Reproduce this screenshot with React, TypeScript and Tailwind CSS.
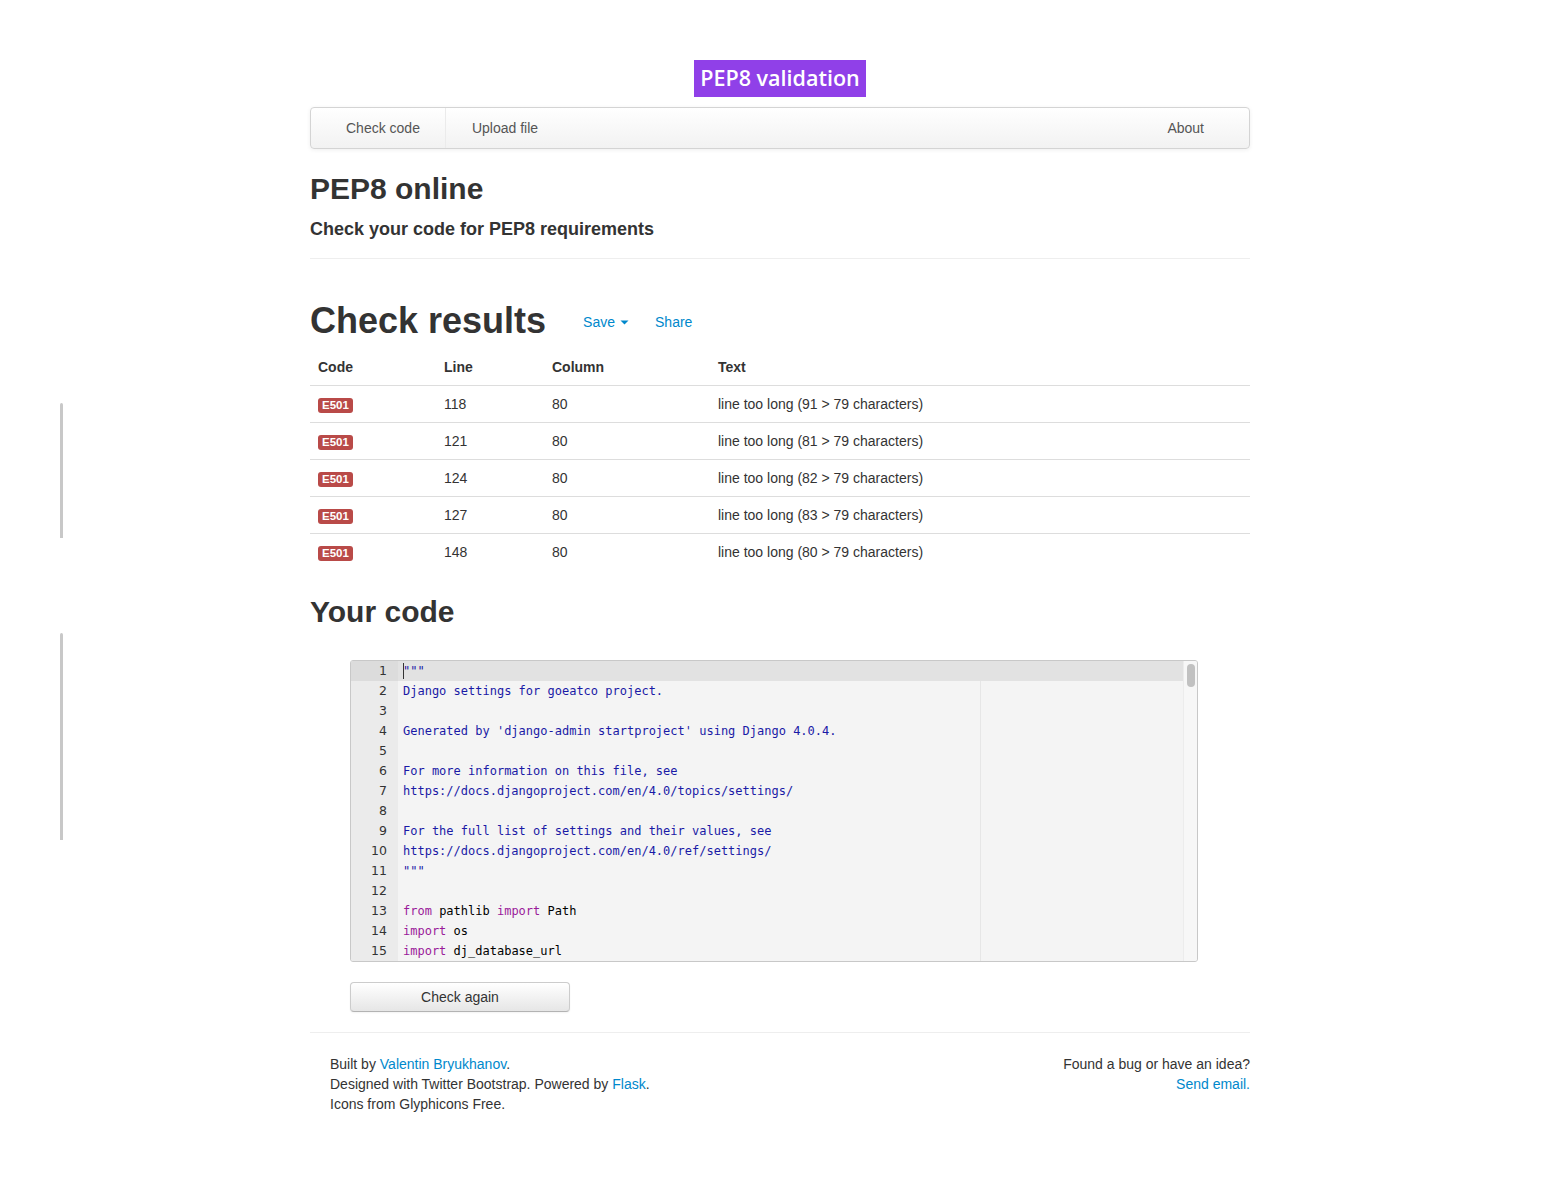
import React from "react";

const rows = [
  { line: 118, col: 80, text: "line too long (91 > 79 characters)" },
  { line: 121, col: 80, text: "line too long (81 > 79 characters)" },
  { line: 124, col: 80, text: "line too long (82 > 79 characters)" },
  { line: 127, col: 80, text: "line too long (83 > 79 characters)" },
  { line: 148, col: 80, text: "line too long (80 > 79 characters)" },
];

type Tok = { t: string; k?: "s" | "k" };
const code: Tok[][] = [
  [{ t: '"""', k: "s" }],
  [{ t: "Django settings for goeatco project.", k: "s" }],
  [],
  [{ t: "Generated by 'django-admin startproject' using Django 4.0.4.", k: "s" }],
  [],
  [{ t: "For more information on this file, see", k: "s" }],
  [{ t: "https://docs.djangoproject.com/en/4.0/topics/settings/", k: "s" }],
  [],
  [{ t: "For the full list of settings and their values, see", k: "s" }],
  [{ t: "https://docs.djangoproject.com/en/4.0/ref/settings/", k: "s" }],
  [{ t: '"""', k: "s" }],
  [],
  [{ t: "from", k: "k" }, { t: " pathlib " }, { t: "import", k: "k" }, { t: " Path" }],
  [{ t: "import", k: "k" }, { t: " os" }],
  [{ t: "import", k: "k" }, { t: " dj_database_url" }],
];

export default function App() {
  return (
    <div
      className="relative min-h-[1194px] bg-white text-[14px] leading-[20px] text-[#333]"
      style={{ fontFamily: '"Liberation Sans", Arial, sans-serif' }}
    >
      <div className="absolute left-[60px] top-[403px] h-[135px] w-[3px] rounded-t-sm bg-[#c8c8c8]" />
      <div className="absolute left-[60px] top-[633px] h-[207px] w-[3px] rounded-t-sm bg-[#c8c8c8]" />

      <div className="mx-auto w-[940px] pt-[60px]">
        <div className="flex justify-center">
          <div
            className="h-[37px] bg-[#9040e8] px-[6px] text-[21.5px] font-semibold leading-[36px] text-white"
            style={{ fontFamily: '"Open Sans", "Noto Sans", sans-serif' }}
          >
            PEP8 validation
          </div>
        </div>

        <div className="mt-[10px] flex h-[42px] items-stretch rounded-[4px] border border-[#d4d4d4] bg-gradient-to-b from-white to-[#f2f2f2] px-[20px] text-[#555] shadow-[0_1px_4px_rgba(0,0,0,0.065)]">
          <div className="flex items-center border-r border-[#ebebeb] pl-[15px] pr-[25px]">Check code</div>
          <div className="flex items-center px-[26px]">Upload file</div>
          <div className="flex-1" />
          <div className="flex items-center pr-[25px]">About</div>
        </div>

        <h2 className="mt-[20px] text-[30px] font-bold leading-[40px] text-[#333]">PEP8 online</h2>
        <h4 className="mt-[10px] text-[18px] font-bold leading-[20px]">Check your code for PEP8 requirements</h4>
        <div className="mt-[19px] border-t border-[#eee]" />

        <div className="mt-[42px] flex h-[40px] items-center">
          <h1 className="text-[36px] font-bold leading-[40px] text-[#333]">Check results</h1>
          <div className="ml-[37px] mt-[2px] flex items-center text-[#0088cc]">
            <span>Save</span>
            <svg width="9" height="5" viewBox="0 0 9 5" className="ml-[5px] mt-[1px]">
              <path d="M0.5 0.5 L4.5 4.5 L8.5 0.5 Z" fill="#0088cc" />
            </svg>
            <span className="ml-[26px]">Share</span>
          </div>
        </div>

        <table className="mt-[8px] w-full border-collapse">
          <thead>
            <tr className="border-b border-[#ddd]">
              <th className="w-[126px] p-[8px] text-left font-bold">Code</th>
              <th className="w-[108px] p-[8px] text-left font-bold">Line</th>
              <th className="w-[166px] p-[8px] text-left font-bold">Column</th>
              <th className="p-[8px] text-left font-bold">Text</th>
            </tr>
          </thead>
          <tbody>
            {rows.map((r, i) => (
              <tr key={i} className={i < rows.length - 1 ? "border-b border-[#ddd]" : ""}>
                <td className="h-[37px] px-[8px] py-0 align-middle">
                  <span className="inline-block rounded-[3px] bg-[#b94a48] px-[4px] text-[11.5px] font-bold leading-[15px] text-white">
                    E501
                  </span>
                </td>
                <td className="px-[8px]">{r.line}</td>
                <td className="px-[8px]">{r.col}</td>
                <td className="px-[8px]">{r.text}</td>
              </tr>
            ))}
          </tbody>
        </table>

        <h2 className="mt-[21px] text-[30px] font-bold leading-[40px] text-[#333]">Your code</h2>

        <div className="px-[40px]">
          <div className="mt-[28px] flex h-[302px] w-[848px] overflow-hidden rounded-[3px] border border-[#c8c8c8] bg-[#f4f4f4]">
            <div className="relative flex-1 overflow-hidden">
              <div className="absolute bottom-0 top-0 left-[629px] w-px bg-[#e6e6e6]" />
              {code.map((line, i) => (
                <div
                  key={i}
                  className={
                    "relative flex h-[20px] leading-[20px] " + (i === 0 ? "bg-[#e2e2e2]" : "")
                  }
                >
                  <div
                    className={
                      "w-[47px] shrink-0 pr-[11px] text-right text-[12.5px] text-[#333] " +
                      (i === 0 ? "bg-[#dcdcdc]" : "bg-[#ebebeb]")
                    }
                    style={{ fontFamily: '"DejaVu Sans", sans-serif' }}
                  >
                    {i + 1}
                  </div>
                  <div
                    className="relative whitespace-pre pl-[5px] text-[12px] text-black"
                    style={{ fontFamily: '"DejaVu Sans Mono", monospace' }}
                  >
                    {i === 0 && (
                      <span className="absolute left-[5px] top-[2px] h-[16px] w-px bg-[#333]" />
                    )}
                    {line.map((tk, j) => (
                      <span
                        key={j}
                        className={
                          tk.k === "s" ? "text-[#1a1aa6]" : tk.k === "k" ? "text-[#9a1a9a]" : "text-black"
                        }
                      >
                        {tk.t}
                      </span>
                    ))}
                  </div>
                </div>
              ))}
            </div>
            <div className="w-[14px] shrink-0 border-l border-[#ececec] bg-[#f7f7f7] pt-[3px]">
              <div className="mx-auto h-[23px] w-[8px] rounded-full bg-[#c1c1c1]" />
            </div>
          </div>

          <button className="mt-[20px] h-[30px] w-[220px] rounded-[4px] border border-[#ccc] border-b-[#b3b3b3] bg-gradient-to-b from-white to-[#e6e6e6] text-[14px] text-[#333] shadow-[inset_0_1px_0_rgba(255,255,255,0.2),0_1px_2px_rgba(0,0,0,0.05)]">
            Check again
          </button>
        </div>

        <div className="mt-[20px] border-t border-[#eee]" />

        <div className="flex justify-between pt-[21px]">
          <div className="pl-[20px]">
            <div>
              Built by <span className="text-[#0088cc]">Valentin Bryukhanov</span>.
            </div>
            <div>
              Designed with Twitter Bootstrap. Powered by <span className="text-[#0088cc]">Flask</span>.
            </div>
            <div>Icons from Glyphicons Free.</div>
          </div>
          <div className="text-right">
            <div>Found a bug or have an idea?</div>
            <div className="text-[#0088cc]">Send email.</div>
          </div>
        </div>
      </div>
    </div>
  );
}
